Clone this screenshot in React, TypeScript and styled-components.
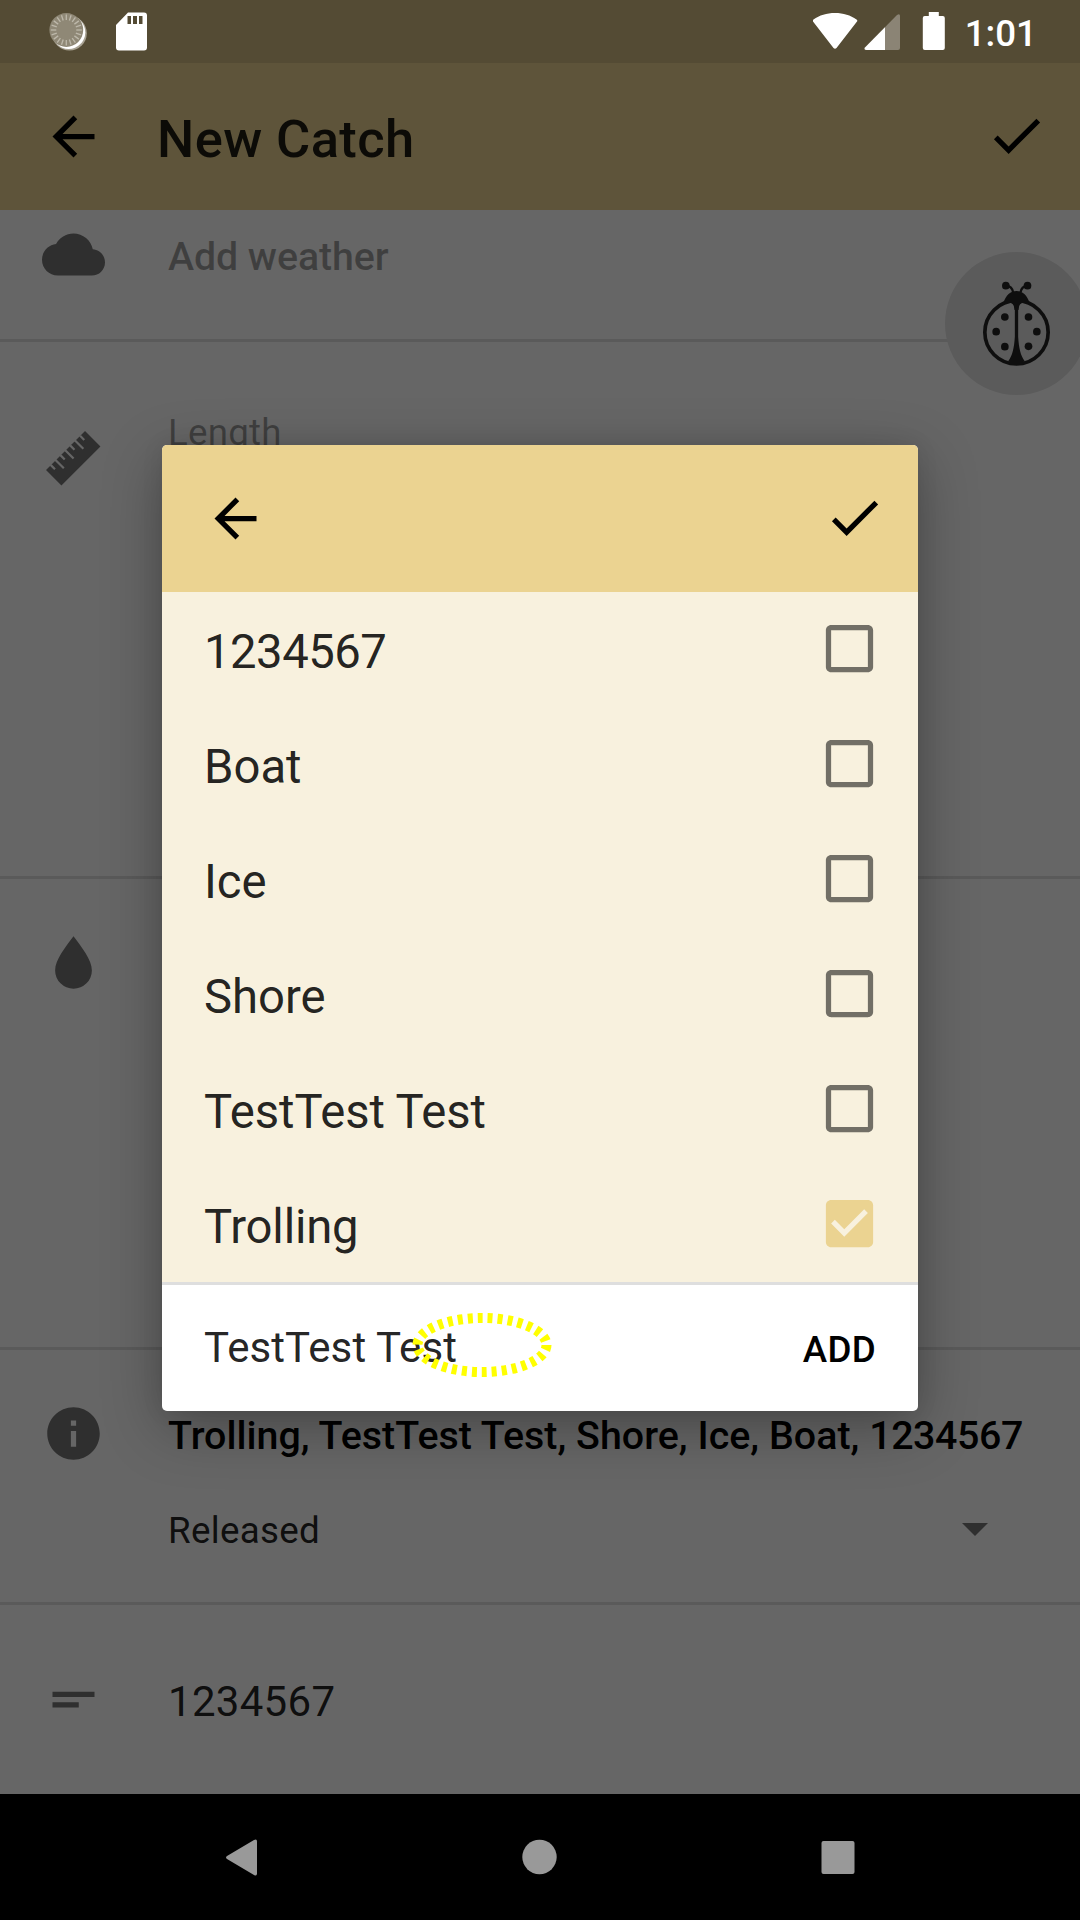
import React, { useState } from 'react';
import styled, { createGlobalStyle } from 'styled-components';

const GlobalStyle = createGlobalStyle`
  *, *::before, *::after { box-sizing: border-box; }
  body { margin: 0; background: #000; font-family: Roboto, "Noto Sans", sans-serif; }
  button { border: 0; background: none; padding: 0; margin: 0; font: inherit; color: inherit; display: flex; }
`;

const Screen = styled.div`
  position: relative;
  display: flex;
  flex-direction: column;
  width: 1080px;
  height: 1920px;
  overflow: hidden;
`;

const AppWindow = styled.div`
  position: relative;
  flex: 1;
  display: flex;
  flex-direction: column;
  background: #fff;
  overflow: hidden;
`;

const StatusBar = styled.header`
  height: 63px;
  flex: none;
  display: flex;
  align-items: center;
  justify-content: space-between;
  padding: 0 43px 0 49px;
  background: #544b34;
  color: #fff;
`;

const StatusGroup = styled.div<{ $gap: number }>`
  display: flex;
  align-items: center;
  gap: ${(p) => p.$gap}px;
`;

const Clock = styled.span`
  font-size: 36.75px;
  font-weight: 500;
  line-height: 42px;
  padding: 4px 0 0 19px;
`;

const AppBar = styled.div`
  height: 147px;
  flex: none;
  display: flex;
  align-items: center;
  padding: 0 32px 0 42px;
  background: #ebd391;
`;

const Title = styled.h1`
  flex: 1;
  margin: 0;
  padding: 5px 0 0 52px;
  font-size: 52.5px;
  font-weight: 500;
  line-height: 62px;
  letter-spacing: 0.4px;
  color: rgba(0, 0, 0, 0.87);
`;

const Section = styled.section<{ $height: number; $top: number; $last?: boolean }>`
  flex: none;
  display: flex;
  align-items: flex-start;
  gap: 63px;
  height: ${(p) => p.$height}px;
  padding: ${(p) => p.$top}px 52px 0 42px;
  border-bottom: ${(p) => (p.$last ? 0 : 3)}px solid rgba(0, 0, 0, 0.12);
  color: rgba(0, 0, 0, 0.54);
`;

const Fields = styled.div<{ $offset: number }>`
  flex: 1;
  display: flex;
  flex-direction: column;
  margin-top: ${(p) => p.$offset}px;
`;

const FieldText = styled.div<{ $size: number; $weight?: number; $color?: string; $spacing?: number }>`
  font-size: ${(p) => p.$size}px;
  font-weight: ${(p) => p.$weight ?? 400};
  color: ${(p) => p.$color ?? 'rgba(0, 0, 0, 0.87)'};
  letter-spacing: ${(p) => p.$spacing ?? 0}px;
  line-height: 50px;
  white-space: nowrap;
`;

const Digits = styled.span`
  letter-spacing: -0.4px;
`;

const SelectRow = styled.div`
  display: flex;
  align-items: flex-start;
  justify-content: space-between;
  margin-top: 45px;
  padding-right: 40px;

  svg {
    margin-top: 17px;
  }
`;

const DebugButton = styled.div`
  position: absolute;
  left: 945px;
  top: 252px;
  width: 143px;
  height: 143px;
  border-radius: 50%;
  background: #e3e3e3;
  color: #242424;
  display: flex;
  justify-content: center;
  padding: 28px 1px 0 0;
`;

const Scrim = styled.div`
  position: absolute;
  inset: 63px 0 0;
  background: rgba(0, 0, 0, 0.6);
  display: flex;
  justify-content: center;
  align-items: flex-start;
  padding-top: 382px;
`;

const Dialog = styled.div`
  position: relative;
  width: 756px;
  border-radius: 5px;
  overflow: hidden;
  background: #fff;
`;

const DialogShadow = styled.div`
  border-radius: 5px;
  box-shadow: 0 16px 60px rgba(0, 0, 0, 0.3), 0 0 22px rgba(0, 0, 0, 0.08);
`;

const DialogHeader = styled.div`
  height: 147px;
  display: flex;
  align-items: center;
  justify-content: space-between;
  padding: 0 32px 0 42px;
  background: #ebd391;
`;

const List = styled.ul`
  margin: 0;
  padding: 0;
  list-style: none;
  background: #f8f1de;
`;

const Item = styled.li`
  height: 115px;
  display: flex;
  align-items: center;
  justify-content: space-between;
  padding: 0 37px 0 42px;
`;

const ItemLabel = styled.span<{ $spacing: number }>`
  padding-top: 5px;
  font-size: 47.25px;
  line-height: 56px;
  letter-spacing: ${(p) => p.$spacing}px;
  color: rgba(0, 0, 0, 0.87);
`;

const Footer = styled.div`
  position: relative;
  height: 129px;
  display: flex;
  align-items: center;
  justify-content: space-between;
  padding: 0 42px;
  border-top: 3px solid #dedede;
`;

const NewItem = styled.span`
  font-size: 42px;
  line-height: 50px;
  letter-spacing: 0.1px;
  color: rgba(0, 0, 0, 0.87);
`;

const AddButton = styled.button`
  && {
    padding-top: 3px;
    font-size: 36.75px;
    font-weight: 500;
    line-height: 44px;
    letter-spacing: 0.3px;
    color: #000;
  }
`;

const TouchMark = styled.svg`
  position: absolute;
  left: 250px;
  top: 28px;
  pointer-events: none;
`;

const NavBar = styled.nav`
  height: 126px;
  flex: none;
  display: flex;
  align-items: center;
  justify-content: center;
  gap: 235px;
  background: #000;
  color: #999;
`;

const IconSvg = styled.svg<{ $raise: number }>`
  flex: none;
  margin-bottom: ${(p) => p.$raise}px;
`;

function Icon({ d, raise = 0 }: { d: string; raise?: number }) {
  return (
    <IconSvg $raise={raise} width="63" height="63" viewBox="0 0 24 24" fill="currentColor">
      <path d={d} />
    </IconSvg>
  );
}

const paths = {
  back: 'M20 11H7.83l5.59-5.59L12 4l-8 8 8 8 1.41-1.41L7.83 13H20v-2z',
  check: 'M9 16.17L4.83 12l-1.42 1.41L9 19 21 7l-1.41-1.41z',
  cloud:
    'M19.35 10.04C18.67 6.59 15.64 4 12 4 9.11 4 6.6 5.64 5.35 8.04 2.34 8.36 0 10.91 0 14c0 3.31 2.69 6 6 6h13c2.76 0 5-2.24 5-5 0-2.64-2.05-4.78-4.65-4.96z',
  drop: 'M12 2C9 6 5 11 5 15a7 7 0 0 0 14 0c0-4-4-9-7-13z',
  info: 'M12 2C6.48 2 2 6.48 2 12s4.48 10 10 10 10-4.48 10-10S17.52 2 12 2zm1 15h-2v-6h2v6zm0-8h-2V7h2v2z',
  notes: 'M4 9h16v2H4zm0 4h10v2H4z',
  box: 'M19 5v14H5V5h14m0-2H5c-1.1 0-2 .9-2 2v14c0 1.1.9 2 2 2h14c1.1 0 2-.9 2-2V5c0-1.1-.9-2-2-2z',
  boxChecked:
    'M19 3H5c-1.11 0-2 .9-2 2v14c0 1.1.89 2 2 2h14c1.11 0 2-.9 2-2V5c0-1.1-.89-2-2-2zm-9 14l-5-5 1.41-1.41L10 14.17l7.59-7.59L19 8l-9 9z',
};

const CheckToggle = styled.button<{ $on: boolean }>`
  && {
    color: ${(p) => (p.$on ? '#ebd391' : 'rgba(0, 0, 0, 0.54)')};
  }
`;

function Ruler() {
  const notches = [1, 2, 3, 4, 5, 6, 7]
    .map((k) => {
      const depth = k % 2 ? 5.8 : 11.4;
      return `M${6.9 * k - 1.1} 0v${depth}h2.2V0z`;
    })
    .join('');
  return (
    <IconSvg $raise={0} width="63" height="63" viewBox="0 0 63 63" fill="currentColor">
      <path transform="translate(4 44) rotate(-45)" fillRule="evenodd" d={`M0 0H55.2V21.8H0z${notches}`} />
    </IconSvg>
  );
}

function SyncGlyph() {
  const ticks = Array.from({ length: 20 }, (_, i) => i * 18);
  return (
    <svg width="39" height="40" viewBox="0 0 39 40">
      <circle cx="20.500" cy="21.300" r="17.300" fill="#a8a293" />
      <circle cx="19.600" cy="20.300" r="16.700" fill="#fff" />
      <circle cx="17.300" cy="18" r="16.900" fill="#8f8876" />
      {ticks.map((a) => (
        <path key={a} d="M17.3 2.500v5.500" stroke="#bdb8aa" strokeWidth="1.300" transform={`rotate(${a} 17.3 18)`} />
      ))}
    </svg>
  );
}

function SdCard() {
  return (
    <svg width="31" height="39" viewBox="0 0 31 39">
      <path
        fillRule="evenodd"
        fill="#fff"
        d="M12 .5h16a3 3 0 0 1 3 3v32a3 3 0 0 1-3 3H3a3 3 0 0 1-3-3V13zM11.500 4v8h3.500V4zM17 4v8h4V4zM23 4v8h3.500V4z"
      />
    </svg>
  );
}

function Radios() {
  return (
    <svg width="133" height="40" viewBox="0.500 0 133 40" fill="#fff">
      <path d="M.5 9.500Q-.3 8.300 1 7.500C7 3.300 14 1 22.500 1S38 3.300 44 7.500q1.300.8.500 2L24 36q-1.500 1.600-3 0z" />
      <path d="M84.500 3q3-2 3 1v32q0 2-2 2H54q-3-.2-1.500-2.500z" opacity=".32" />
      <path d="M72.500 15.200V38H54q-3-.2-1.500-2.500z" />
      <path d="M116.300 0h10v4h4q2 0 2 2v30q0 2-2 2h-18q-2 0-2-2V6q0-2 2-2h4z" />
    </svg>
  );
}

function Ladybug() {
  return (
    <svg width="70" height="88" viewBox="242.500 180 210 264" fill="currentColor">
      <ellipse cx="349" cy="337" rx="95" ry="95" fill="none" stroke="currentColor" strokeWidth="11" />
      <path d="M309 250C317 225 331 213 349 213s32 12 40 37c-14-6-27-3-32 8l-2 12h-12l-2-12c-5-11-18-14-32-8z" />
      <path d="M344 255h10v95c2 33 7 56 20 74q-25 14-50 0c13-18 18-41 20-74z" />
      <path d="M318 196q18 3 21 21M382 196q-18 3-21 21" fill="none" stroke="currentColor" strokeWidth="7" />
      {[
        [317, 197], [382, 197], [314, 291], [385, 291], [288, 335], [410, 335], [314, 380], [385, 379],
      ].map(([x, y]) => (
        <circle key={`${x}-${y}`} cx={x} cy={y} r="11.500" />
      ))}
    </svg>
  );
}

const options = [
  { name: '1234567', spacing: -0.5 },
  { name: 'Boat', spacing: 0 },
  { name: 'Ice', spacing: 0 },
  { name: 'Shore', spacing: 0 },
  { name: 'TestTest Test', spacing: -0.1 },
  { name: 'Trolling', spacing: -0.2 },
];

export default function App() {
  const [selected, setSelected] = useState<string[]>(['Trolling']);
  const toggle = (name: string) =>
    setSelected((s) => (s.includes(name) ? s.filter((n) => n !== name) : [...s, name]));

  return (
    <Screen>
      <GlobalStyle />
      <AppWindow>
        <StatusBar>
          <StatusGroup $gap={28}>
            <SyncGlyph />
            <SdCard />
          </StatusGroup>
          <StatusGroup $gap={0}>
            <Radios />
            <Clock>1:01</Clock>
          </StatusGroup>
        </StatusBar>
        <AppBar>
          <Icon d={paths.back} />
          <Title>New Catch</Title>
          <Icon d={paths.check} raise={2} />
        </AppBar>
        <Section $height={132} $top={13}>
          <Icon d={paths.cloud} />
          <Fields $offset={9}>
            <FieldText $size={39.375} $weight={500} $spacing={-0.1} $color="rgba(0, 0, 0, 0.38)">
              Add weather
            </FieldText>
          </Fields>
        </Section>
        <Section $height={537} $top={84}>
          <Ruler />
          <Fields $offset={-18}>
            <FieldText $size={36.75} $spacing={0.2} $color="rgba(0, 0, 0, 0.38)">
              Length
            </FieldText>
          </Fields>
        </Section>
        <Section $height={471} $top={52}>
          <Icon d={paths.drop} />
        </Section>
        <Section $height={255} $top={52}>
          <Icon d={paths.info} />
          <Fields $offset={9}>
            <FieldText $size={39.375} $weight={500} $spacing={0.02} $color="#000">
              Trolling, TestTest Test, Shore, Ice, Boat, <Digits>1234567</Digits>
            </FieldText>
            <SelectRow>
              <FieldText $size={36.75} $spacing={0.3}>Released</FieldText>
              <svg width="26" height="13" viewBox="0 0 26 13" fill="currentColor">
                <path d="M0 0h26L13 13z" />
              </svg>
            </SelectRow>
          </Fields>
        </Section>
        <Section $height={189} $top={63} $last>
          <Icon d={paths.notes} />
          <Fields $offset={9}>
            <FieldText $size={42} $spacing={0.3}>1234567</FieldText>
          </Fields>
        </Section>
        <DebugButton>
          <Ladybug />
        </DebugButton>
        <Scrim>
          <DialogShadow>
            <Dialog role="dialog">
              <DialogHeader>
                <button aria-label="Back">
                  <Icon d={paths.back} />
                </button>
                <button aria-label="Done">
                  <Icon d={paths.check} raise={2} />
                </button>
              </DialogHeader>
              <List>
                {options.map(({ name, spacing }) => {
                  const on = selected.includes(name);
                  return (
                    <Item key={name}>
                      <ItemLabel $spacing={spacing}>{name}</ItemLabel>
                      <CheckToggle $on={on} role="checkbox" aria-checked={on} onClick={() => toggle(name)}>
                        <Icon d={on ? paths.boxChecked : paths.box} raise={2} />
                      </CheckToggle>
                    </Item>
                  );
                })}
              </List>
              <Footer>
                <NewItem>TestTest Test</NewItem>
                <AddButton>ADD</AddButton>
                <TouchMark width="140" height="64" viewBox="0 0 140 64">
                  <ellipse cx="70" cy="32" rx="64.500" ry="27" fill="none" stroke="#ff0" strokeWidth="10" strokeDasharray="5 5" />
                </TouchMark>
              </Footer>
            </Dialog>
          </DialogShadow>
        </Scrim>
      </AppWindow>
      <NavBar>
        <svg width="63" height="63" viewBox="0 0 63 63" fill="currentColor">
          <path d="M43 14q3-1.500 3 1.500v32q0 3-3 1.500L16 33q-2-1.500 0-3z" />
        </svg>
        <svg width="63" height="63" viewBox="0 0 63 63" fill="currentColor">
          <circle cx="30.500" cy="31" r="17.200" />
        </svg>
        <svg width="63" height="63" viewBox="0 0 63 63" fill="currentColor">
          <rect x="14.500" y="15" width="33" height="33" rx="2" />
        </svg>
      </NavBar>
    </Screen>
  );
}
